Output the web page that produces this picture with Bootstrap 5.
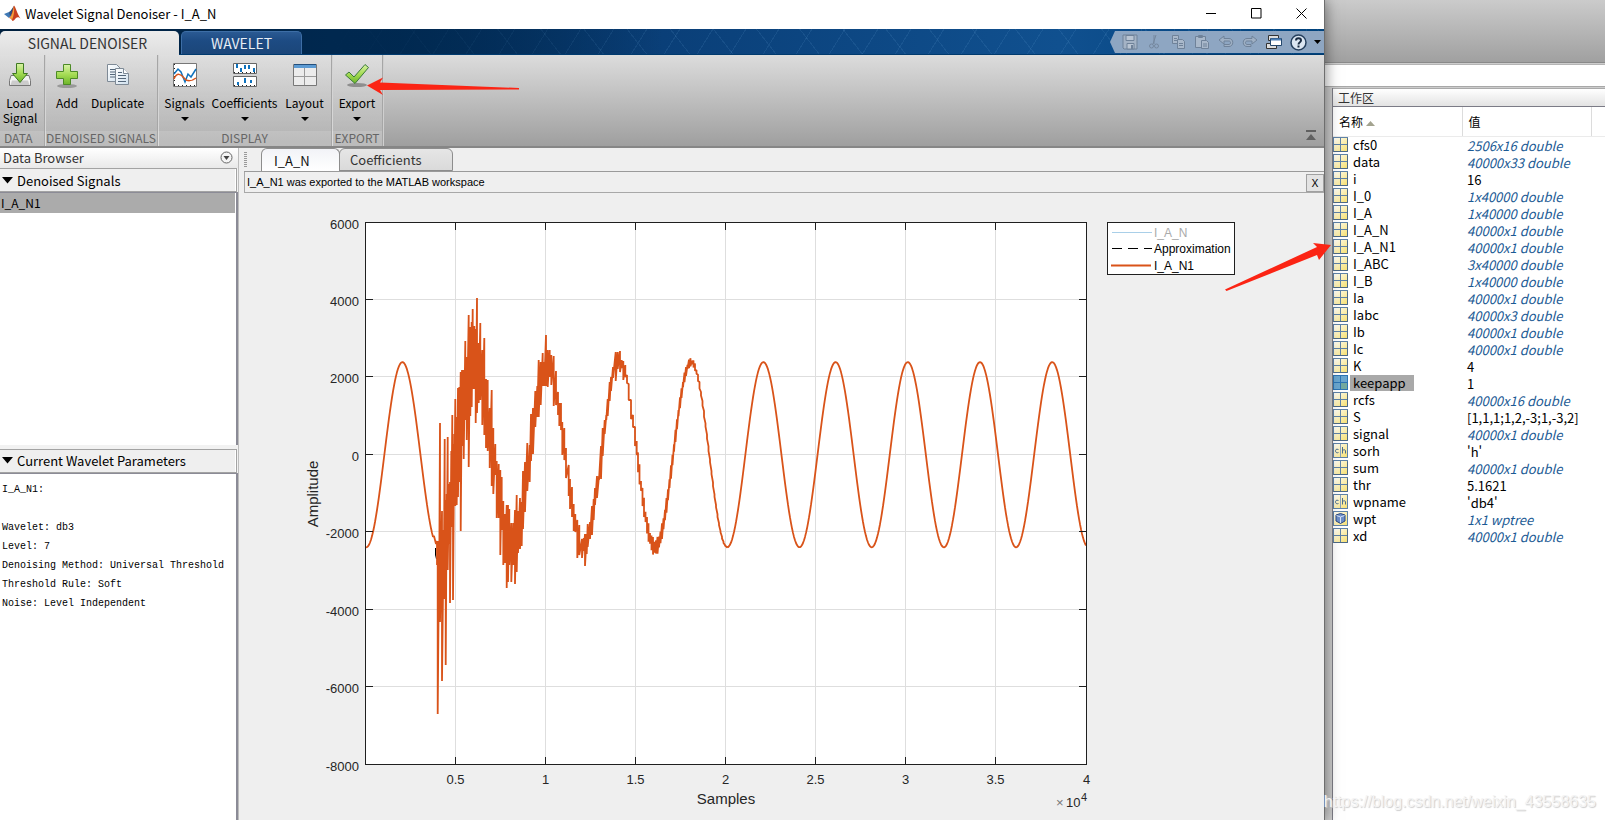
<!DOCTYPE html>
<html lang="en">
<head>
<meta charset="utf-8">
<meta name="viewport" content="width=device-width, initial-scale=1">
<title>Wavelet Signal Denoiser - I_A_N</title>
<link rel="stylesheet" href="https://cdn.jsdelivr.net/npm/bootstrap@5.3.0/dist/css/bootstrap.min.css">
<script src="https://cdn.jsdelivr.net/npm/bootstrap@5.3.0/dist/js/bootstrap.bundle.min.js"></script>
<style>
body{font-family:"Noto Sans CJK SC","Noto Sans",sans-serif;font-size:12px;line-height:15px;color:#000;background:#fff}
button{border:0;background:none;padding:0;color:inherit;font:inherit}
svg{display:block}
.app-window{background:#efefef;border-right:1px solid #6e6e6e;box-shadow:0 0 14px rgba(0,0,0,.5);z-index:2;min-width:0}
.title-bar{height:29px;background:#fff;font-size:13px;line-height:26px;padding-left:4px;padding-bottom:2px}
.win-btn{width:45px;height:27px}
.tab-strip{height:26px;background:linear-gradient(90deg,#00203f 0,#00284f 25%,rgba(0,40,79,0) 50%),repeating-linear-gradient(52deg,transparent 0 33px,rgba(110,170,220,.12) 33px 34px),repeating-linear-gradient(-58deg,transparent 0 27px,rgba(110,170,220,.12) 27px 28px),linear-gradient(90deg,#00203f 0,#00284f 25%,#0a3f78 50%,#10508f 80%,#00427c 100%);border-bottom:1px solid #003a6e}
.tool-tab{font-size:14px;line-height:23px;height:23px;border-radius:5px 5px 0 0}
.tool-tab.on{width:179px;background:linear-gradient(#ececec,#dedede);color:#333;height:24px;margin-bottom:-1px;padding-right:4px}
.tool-tab.off{width:121px;margin-left:2px;background:linear-gradient(#2a5a93,#1d4b83 40%,#1b4679);color:#e8eef5;border:1px solid #3d6ea6;border-bottom:0}
.quick-bar{height:22px;width:214px;margin-bottom:1px;background:#8ea6c2;clip-path:polygon(5px 0,100% 0,100% 100%,5px 100%,0 50%)}
.quick-btn{width:24px;height:22px}
.ribbon{height:93px;background:linear-gradient(#dcdcdc,#9f9f9f);border-bottom:2px solid #868686}
.ribbon-section{border-right:1px solid #a6a6a6;box-shadow:1px 0 0 #cfcfcf;background:linear-gradient(rgba(255,255,255,.08),rgba(255,255,255,.18))}
.section-name{height:15px;line-height:13px;font-size:12px;color:#666;background:rgba(255,255,255,.14);white-space:nowrap}
.tool-btn{padding-top:7px;display:flex;flex-direction:column;align-items:center;justify-content:flex-start}
.tool-btn svg.tool-icon{width:26px;height:26px;margin-bottom:7px}
.drop-mark{margin-top:7px}
.side-panel{width:239px;background:#f2f2f2;border-right:1px solid #bdbdbd}
.side-title{height:20px;padding-left:3px;padding-right:5px;padding-bottom:2px;background:linear-gradient(#fff,#e9e9e9);color:#333;font-size:13px}
.fold-head{height:24px;margin-right:1px;border:1px solid #a3a3a3;border-left:0;background:#efefef;font-size:13px;padding-left:2px;box-shadow:inset -1px 0 0 #fff}
.pane{background:#fff;border-right:2px solid #8b8b96;border-top:1px solid #8b8b96;min-height:0}
.signal-item{height:20px;background:#ababab;font-size:12px;line-height:20px;padding-left:1px;text-align:left;margin-right:1px}
.params{font-family:"Liberation Mono",monospace;font-size:10px;line-height:19px;padding:6px 2px;margin:0;overflow:hidden}
.doc-tabs{height:24px;border-bottom:1px solid #9a9a9a;margin-left:5px;font-size:13px}
.doc-tab{height:23px;border:1px solid #8d8d8d;border-radius:6px 6px 0 0;text-align:left;line-height:19px;color:#333}
.doc-tab.on{width:79px;background:linear-gradient(#f2f3f7,#fff);border-bottom:0;color:#111;padding-left:12px}
.doc-tab.off{width:114px;margin-left:-1px;background:linear-gradient(#e6e6e6,#dadada);padding-left:10px}
.grip{width:3px;height:15px;margin-right:14px;background:repeating-linear-gradient(#9a9a9a 0 1px,transparent 1px 2px)}
.msg-bar{height:21px;margin-left:5px;border-bottom:1px solid #a8a8a8;border-left:1px solid #a8a8a8;padding:1px 0 0 2px;font-family:"Liberation Sans",sans-serif;font-size:11px}
.msg-close{width:18px;height:18px;border:1px solid #a0a0a0;background:#e3e3e3;font-size:11px;line-height:16px;font-family:"Noto Sans",sans-serif}
.plot{font-family:"Liberation Sans",sans-serif;font-size:13px;fill:#262626}
.plot .axis-name{font-size:15px}
.plot .key{font-size:12px;fill:#000}
.plot .exponent{font-size:11px}
.workspace{width:280px;background:#cdcdcd}
.desk-top{height:63px;background:linear-gradient(#cbcbcb,#a0a0a0);border-bottom:1px solid #8a8a8a}
.desk-bar{height:23px;background:#fff;margin-top:1px;border-top:1px solid #b5b5b5;border-bottom:1px solid #a8a8a8}
.ws-panel{margin:1px 0 0 7px;border-left:1px solid #7d7d86;background:#fff}
.ws-title{height:19px;line-height:17px;padding-left:5px;background:linear-gradient(#fff,#e3e3e3);border-top:1px solid #aaa;border-bottom:1px solid #7b7b86;color:#333}
.ws-table{table-layout:fixed;width:100%;border-collapse:collapse;font-size:13px;line-height:17px}
.ws-table th{height:29px;font-weight:400;font-size:12px;padding:0 0 0 6px;border-right:1px solid #dcdcdc;border-bottom:1px solid #ebebeb}
.ws-table td{height:17px;padding:0;white-space:nowrap}
.ws-table td + td{padding-left:5px}
.ws-table i{color:#1b5a94}
.var-name{padding:0 8px 0 3px;margin-left:1px;line-height:16px}
.var-name.picked{background:#a9a9a9}
.var-icon{width:16px;height:16px}
.arrow-export{left:367px;top:76px;width:154px;height:20px;z-index:5;pointer-events:none}
.arrow-ws{right:-8px;top:240px;width:108px;height:54px;z-index:5;pointer-events:none}
.watermark{right:9px;bottom:8px;font:16px/20px "Liberation Sans",sans-serif;color:#f4f4f4;text-shadow:1px 1px 1px #ccc;z-index:6;pointer-events:none}
</style>
</head>
<body class="d-flex vh-100 overflow-hidden position-relative">

<svg width="0" height="0" class="position-absolute" aria-hidden="true">
  <defs>
    <linearGradient id="green" x1="0" y1="0" x2="0" y2="1"><stop offset="0" stop-color="#d9f2a8"/><stop offset=".5" stop-color="#a5dc54"/><stop offset="1" stop-color="#6db52a"/></linearGradient>
    <linearGradient id="paper" x1="0" y1="0" x2="1" y2="1"><stop offset="0" stop-color="#fff"/><stop offset="1" stop-color="#cfe0ee"/></linearGradient>
    <linearGradient id="yellow" x1="0" y1="0" x2="1" y2="1"><stop offset="0" stop-color="#fff"/><stop offset="1" stop-color="#f7e06e"/></linearGradient>
    <symbol id="v-num" viewBox="0 0 16 16"><rect x=".5" y=".5" width="14" height="14" fill="url(#yellow)" stroke="#5f83a8"/><path d="M7.500 1v13M1 7.500h13" stroke="#5f83a8"/><path d="M.5 14.500h14v-13" fill="none" stroke="#4e6a86"/></symbol>
    <symbol id="v-sel" viewBox="0 0 16 16"><rect x=".5" y=".5" width="14" height="14" fill="#6aa6cf" stroke="#2c74b4"/><rect x="8" y="8" width="6" height="6" fill="#72a9a0"/><path d="M7.500 1v13M1 7.500h13" stroke="#2c74b4"/></symbol>
    <symbol id="v-chr" viewBox="0 0 16 16"><rect x=".5" y=".5" width="14" height="14" fill="url(#yellow)" stroke="#5f83a8"/><path d="M7.500 1v13" stroke="#8ba4bc"/><path d="M5.500 6.500c-2.500-1-3 .5-3 1.500s1 2.500 3 1.500M9.500 4v6.500M9.500 7.500c2-1.500 3-.5 3 .5v2.500" fill="none" stroke="#4c6f8f"/></symbol>
    <symbol id="v-obj" viewBox="0 0 16 16"><rect x=".5" y=".5" width="14" height="14" fill="url(#yellow)" stroke="#5f83a8"/><path d="M7.500 2.500l4.500 1.500v6l-4.500 2.500L3 10V4z" fill="#6d8fca" stroke="#2c4a80"/><path d="M3.500 4.500l4 1.500 4-1.500M7.500 6v6" fill="none" stroke="#d8e4f6"/></symbol>
  </defs>
</svg>

<main class="app-window flex-grow-1 d-flex flex-column position-relative">
  <header class="title-bar d-flex align-items-center">
    <svg width="17" height="17" viewBox="0 0 17 17"><path d="M0 9l5-2 3 3-3 3z" fill="#3f79b5"/><path d="M5 7c2-1 3-4 5-6l-1 7-3 3z" fill="#2b4f7d"/><path d="M10 .5c1.500 1 3 8 6.500 13-2-2-3.500-1.500-5 0-1 1.500-2 2.500-3 2.500-1-2-2-3-3.500-3C8 12 8.500 3 10 .5z" fill="#c9401d"/><path d="M10 1c.5 5 0 9-2 14-1-2-1.500-2-3-2C8 12 9 6 10 1z" fill="#f3a33c"/></svg>
    <span class="ms-1 me-auto">Wavelet Signal Denoiser - I_A_N</span>
    <button class="win-btn" aria-label="Minimize"><svg class="mx-auto" width="11" height="11"><path d="M0 5.500h10" stroke="#000"/></svg></button>
    <button class="win-btn" aria-label="Maximize"><svg class="mx-auto" width="11" height="11"><path d="M.5.5h9.500v9.500H.5z" fill="none" stroke="#000"/></svg></button>
    <button class="win-btn" aria-label="Close"><svg class="mx-auto" width="11" height="11"><path d="M.5.5l10 10M10.500.5l-10 10" stroke="#000"/></svg></button>
  </header>

  <nav class="tab-strip d-flex align-items-end">
    <button class="tool-tab on">SIGNAL DENOISER</button>
    <button class="tool-tab off">WAVELET</button>
    <div class="quick-bar ms-auto ps-2 d-flex align-items-center">
      <button class="quick-btn" aria-label="Save"><svg class="mx-auto" width="16" height="16"><path d="M1 1h14v14H2l-1-1z" fill="#a4b3c5" stroke="#6f8299"/><path d="M4 1.500h8v5H4zM5 9.500h7V15H5z" fill="#b9c5d3" stroke="#6f8299"/><path d="M9 11h2v4H9z" fill="#6f8299"/></svg></button>
      <button class="quick-btn" aria-label="Cut"><svg class="mx-auto" width="16" height="16" fill="none" stroke="#74879e"><path d="M10 1L7 10M8 1v9"/><circle cx="5.500" cy="12" r="2"/><circle cx="10.500" cy="12" r="2"/></svg></button>
      <button class="quick-btn" aria-label="Copy"><svg class="mx-auto" width="16" height="16" fill="#a9b8ca" stroke="#6f8299"><path d="M2.500 1.500h6v8h-6z"/><path d="M7.500 5.500h5l2 2v7h-7zM9 9.500h4M9 11.500h4M4 4.500h3M4 6.500h3"/></svg></button>
      <button class="quick-btn" aria-label="Paste"><svg class="mx-auto" width="16" height="16" fill="#a9b8ca" stroke="#6f8299"><path d="M1.500 2.500h10v11h-10zM4.500 1.500h4v2h-4z"/><path d="M7.500 6.500h5l2 2v6h-7zM9 10h4M9 12h4"/></svg></button>
      <button class="quick-btn" aria-label="Undo"><svg class="mx-auto" width="16" height="16"><path d="M1 6l5-4v2.500h5c5 0 5 8 0 8H6v-2h5c2 0 2-3.500 0-3.500H6V10z" fill="#9fb0c4" stroke="#6f8299"/></svg></button>
      <button class="quick-btn" aria-label="Redo"><svg class="mx-auto" width="16" height="16"><path d="M15 6l-5-4v2.500H5c-5 0-5 8 0 8h4v-2H5c-2 0-2-3.500 0-3.500h5V10z" fill="#9fb0c4" stroke="#6f8299"/></svg></button>
      <button class="quick-btn" aria-label="Switch windows"><svg class="mx-auto" width="16" height="16"><path d="M2.500 1.500h10v5h-10zM.5 9.500h10v5H.5z" fill="#ddd" stroke="#333"/><path d="M4.500 4.500h11v7h-11z" fill="#fff" stroke="#24486e"/><path d="M5 5.500h10" stroke="#4d7fb5" stroke-width="2"/></svg></button>
      <button class="quick-btn" aria-label="Help"><svg class="mx-auto" width="17" height="17"><circle cx="8.500" cy="8.500" r="7.500" fill="#dbe6f2" stroke="#26405e" stroke-width="1.500"/><path d="M6 6.500c0-3 5-3 5 0 0 2-2.500 1.500-2.500 4M8.500 11.500v2" fill="none" stroke="#1a2c42" stroke-width="2"/></svg></button>
      <button class="flex-grow-1" aria-label="More"><svg class="mx-auto" width="7" height="4"><path d="M0 0h7L3.500 4z"/></svg></button>
    </div>
  </nav>

  <section class="ribbon d-flex position-relative" aria-label="Tools">
    <div class="ribbon-section d-flex flex-column" style="width:45px">
      <div class="d-flex flex-grow-1">
        <button class="tool-btn" style="width:40px"><svg class="tool-icon" viewBox="0 0 26 26"><path d="M4 13.500l-1.500 5v5h21v-5l-1.500-5z" fill="#f3f3f3" stroke="#777"/><path d="M5 18.500h16l1.500 4.500h-19z" fill="#ccc"/><path d="M9.500 1.500h7v10h4L13 20.500l-7.500-9h4z" fill="url(#green)" stroke="#3f7a22"/></svg>Load<br>Signal</button>
      </div>
      <div class="section-name ps-1">DATA</div>
    </div>
    <div class="ribbon-section d-flex flex-column" style="width:113px">
      <div class="d-flex flex-grow-1">
        <button class="tool-btn" style="width:44px"><svg class="tool-icon" viewBox="0 0 26 26"><ellipse cx="13" cy="24" rx="10" ry="2" fill="#999"/><path d="M9.500 2.500h7v7h7v7h-7v6h-7v-6h-7v-7h7z" fill="url(#green)" stroke="#4c8a26"/></svg>Add</button>
        <button class="tool-btn" style="width:57px"><svg class="tool-icon" viewBox="0 0 26 26"><path d="M2.500 2.500h9l4 4v13h-13z" fill="url(#paper)" stroke="#7e8a96"/><path d="M5 7.500h5M5 10h5M5 12.500h5M5 15h5" stroke="#54677a"/><path d="M10.500 6.500h8l5 5v11h-13z" fill="url(#paper)" stroke="#7e8a96"/><path d="M18.500 6.500v5h5" fill="#fff" stroke="#7e8a96"/><path d="M13 10.500h4M13 13.500h8M13 16.500h8M13 19.500h8" stroke="#54677a"/></svg>Duplicate</button>
      </div>
      <div class="section-name text-center">DENOISED SIGNALS</div>
    </div>
    <div class="ribbon-section d-flex flex-column" style="width:174px">
      <div class="d-flex flex-grow-1 ps-1">
        <button class="tool-btn" style="width:45px"><svg class="tool-icon" viewBox="0 0 26 26"><path d="M1.500 1.500h23v23h-23z" fill="#fff" stroke="#777"/><path d="M2.500 2v22M2 23.500h23" fill="none" stroke="#222" stroke-dasharray="1 3"/><path d="M2 12l4-5 3 3 4 10 3-8 3 3 5-8" fill="none" stroke="#0f72bd" stroke-width="1.500"/><path d="M2 17c3-7 7-5 10-1s8 3 12 0" fill="none" stroke="#d95319" stroke-width="1.500"/></svg>Signals<svg width="8" height="4" class="drop-mark"><path d="M0 0h8L4 4z"/></svg></button>
        <button class="tool-btn" style="width:75px"><svg class="tool-icon" viewBox="0 0 26 26"><path d="M1.500 1.500h23v10h-23zM1.500 14.500h23v10h-23z" fill="#fff" stroke="#666"/><path d="M2 10.500h23M2 23.500h23" stroke="#222" stroke-dasharray="1 3"/><path d="M5 2v4M9 6v4M13 3v4M17 3v4M22 6v4M6 20v3M13 16v5M19 18v3" stroke="#0f72bd" stroke-width="2"/></svg>Coefficients<svg width="8" height="4" class="drop-mark"><path d="M0 0h8L4 4z"/></svg></button>
        <button class="tool-btn" style="width:45px"><svg class="tool-icon" viewBox="0 0 26 26"><path d="M1.500 2.500h23v21h-23z" fill="#ececec" stroke="#777"/><path d="M2 3h22v3H2z" fill="#5c9bd3"/><path d="M2 2.500h22" stroke="#234f7c"/><path d="M12.500 6v17M2 14.500h22" stroke="#9a9a9a"/></svg>Layout<svg width="8" height="4" class="drop-mark"><path d="M0 0h8L4 4z"/></svg></button>
      </div>
      <div class="section-name text-center">DISPLAY</div>
    </div>
    <div class="ribbon-section d-flex flex-column" style="width:51px">
      <div class="d-flex flex-grow-1">
        <button class="tool-btn w-100"><svg class="tool-icon" viewBox="0 0 26 26"><ellipse cx="13" cy="23" rx="10" ry="2" fill="#8e8e8e"/><path d="M1.500 13l3.500-3 5 5L21 2.500l3.500 3L11 21.500z" fill="url(#green)" stroke="#3c7a3a"/></svg>Export<svg width="8" height="4" class="drop-mark"><path d="M0 0h8L4 4z"/></svg></button>
      </div>
      <div class="section-name text-center">EXPORT</div>
    </div>
    <button class="ms-auto me-2 mt-auto mb-1" aria-label="Minimize ribbon"><svg width="10" height="12"><path d="M0 0h10v2H0zM5 4l5 6H0z" fill="#606060"/></svg></button>
  </section>

  <div class="d-flex flex-grow-1" style="min-height:0">
    <aside class="side-panel d-flex flex-column">
      <div class="side-title d-flex align-items-center justify-content-between">Data Browser
        <button aria-label="Panel menu"><svg width="13" height="13"><circle cx="6.500" cy="6.500" r="5.500" fill="#f5f5f5" stroke="#666"/><path d="M3.500 5h6L6.500 9z" fill="#444"/></svg></button></div>
      <button class="fold-head d-flex align-items-center"><svg class="me-1" width="11" height="7"><path d="M0 0h11L5.500 6.500z"/></svg>Denoised Signals</button>
      <div class="pane d-flex flex-column" style="flex:257 0 0"><button class="signal-item">I_A_N1</button></div>
      <div style="height:4px"></div>
      <button class="fold-head d-flex align-items-center"><svg class="me-1" width="11" height="7"><path d="M0 0h11L5.500 6.500z"/></svg>Current Wavelet Parameters</button>
      <pre class="params pane" style="flex:341 0 0">I_A_N1:

Wavelet: db3
Level: 7
Denoising Method: Universal Threshold
Threshold Rule: Soft
Noise: Level Independent</pre>
    </aside>

    <section class="flex-grow-1 d-flex flex-column" style="min-width:0">
      <div class="doc-tabs d-flex align-items-end">
        <div class="grip align-self-center"></div>
        <button class="doc-tab on">I_A_N</button>
        <button class="doc-tab off">Coefficients</button>
      </div>
      <div class="msg-bar d-flex align-items-center justify-content-between">I_A_N1 was exported to the MATLAB workspace<button class="msg-close">X</button></div>
      <div class="flex-grow-1" style="min-height:0">
        <svg id="plot" class="plot w-100 h-100" viewBox="239 193 1085 627" role="img" aria-label="Amplitude over samples">
          <rect x="366" y="222.500" width="721" height="542" fill="#fff"/>
          <g id="grid" stroke="#dedede"></g>
          <path d="M435.500 548v7l1 4" stroke="#000" fill="none"/>
          <path id="trace" fill="none" stroke="#d95319" stroke-width="1.800" stroke-linejoin="bevel"/>
          <g id="ticks" stroke="#1f1f1f"></g>
          <rect x="365.500" y="222.500" width="721" height="542" fill="none" stroke="#1f1f1f"/>
          <g id="labels"></g>
          <text class="axis-name" x="726" y="804" text-anchor="middle">Samples</text>
          <text class="axis-name" transform="rotate(-90 318 494)" x="318" y="494" text-anchor="middle">Amplitude</text>
          <text x="1056" y="807" fill="#777">×</text><text x="1066" y="807">10</text><text class="exponent" x="1081" y="801">4</text>
          <rect x="1107.500" y="222.500" width="127" height="52" fill="#fff" stroke="#1f1f1f"/>
          <path d="M1112 232.500h40" stroke="#a9cfe8"/><path d="M1112 248.500h40" stroke="#000" stroke-dasharray="10 6"/><path d="M1111 265.500h40" stroke="#d95319" stroke-width="2"/>
          <g class="key"><text x="1154" y="237" fill="#aaa" style="fill:#aaa">I_A_N</text><text x="1154" y="253">Approximation</text><text x="1154" y="270">I_A_N1</text></g>
        </svg>
      </div>
    </section>
  </div>

  <svg class="arrow-export position-absolute" viewBox="0 0 154 20"><path d="M0 9.500L16 1.500 13 6.500 152 12v1.500L13 14l3 5z" fill="#fb2414"/></svg>
  <svg class="arrow-ws position-absolute" viewBox="0 0 108 54"><path d="M107 5L89 3l4 4L1 49.500l1.500 1.500L93 15l2 5z" fill="#fb2414"/></svg>
</main>

<aside class="workspace d-flex flex-column">
  <div class="desk-top"></div>
  <div class="desk-bar"></div>
  <div class="ws-panel flex-grow-1" lang="zh-CN">
    <div class="ws-title">工作区</div>
    <table class="ws-table">
      <colgroup><col style="width:129px"><col style="width:129px"><col></colgroup>
      <thead><tr><th>名称 <svg class="d-inline-block" width="9" height="5"><path d="M0 5h9L4.500 0z" fill="#a3a38f"/></svg></th><th>值</th><th class="border-end-0"></th></tr></thead>
      <tbody id="vars"></tbody>
    </table>
  </div>
</aside>
<div class="watermark position-absolute">https://blog.csdn.net/weixin_43558635</div>

<script>
// Workspace variables: name, value, icon kind
const vars = [
  ["cfs0","2506x16 double"],["data","40000x33 double"],["i","16"],["I_0","1x40000 double"],["I_A","1x40000 double"],
  ["I_A_N","40000x1 double"],["I_A_N1","40000x1 double"],["I_ABC","3x40000 double"],["I_B","1x40000 double"],
  ["Ia","40000x1 double"],["Iabc","40000x3 double"],["Ib","40000x1 double"],["Ic","40000x1 double"],["K","4"],
  ["keepapp","1","sel"],["rcfs","40000x16 double"],["S","[1,1,1;1,2,-3;1,-3,2]"],["signal","40000x1 double"],
  ["sorh","'h'","chr"],["sum","40000x1 double"],["thr","5.1621"],["wpname","'db4'","chr"],["wpt","1x1 wptree","obj"],["xd","40000x1 double"]];
document.getElementById("vars").innerHTML = vars.map(([n, v, k = "num"]) => {
  const val = /double|wptree/.test(v) ? `<i>${v}</i>` : v;
  return `<tr><td><div class="d-flex align-items-center"><svg class="var-icon"><use href="#v-${k}"/></svg><span class="var-name${k === "sel" ? " picked" : ""}">${n}</span></div></td><td colspan="2">${val}</td></tr>`;
}).join("");

// Axes
let grid = "", ticks = "", labels = "";
for (let i = 1; i <= 8; i++) {
  const x = Math.round(365.5 + i * 90.125) - .5;
  if (i < 8) {
    grid += `<path d="M${x} 223v541"/>`;
    ticks += `<path d="M${x} 764v-7M${x} 223v7"/>`;
  }
  labels += `<text x="${x}" y="784" text-anchor="middle">${i / 2}</text>`;
}
for (let i = 0; i <= 7; i++) {
  const y = Math.round(222.5 + i * 77.43) - .5;
  if (i && i < 7) {
    grid += `<path d="M366 ${y}h720"/>`;
    ticks += `<path d="M366 ${y}h7M1086 ${y}h-7"/>`;
  }
  labels += `<text x="359" y="${y + 6}" text-anchor="end">${6000 - i * 2000}</text>`;
}
document.getElementById("grid").innerHTML = grid;
document.getElementById("ticks").innerHTML = ticks;
document.getElementById("labels").innerHTML = labels;

// Disturbed stretch of the signal: x, upper bound, lower bound
const burst = [437,541,565,437.7,541,714,439,560,621,440,423,622,442,511,681,443.7,530,599,444.7,439,599,445.7,500,665,446.7,494,570,447.7,437,570,449,484,544,450,482,603,451.3,451,527,452.3,415,520,453,444,600,454.3,434,499,455.3,399,506,456.7,417,505,458,388,497,459.3,387,482,460.7,372,531,462,370,446,463.700,370,459,465.3,341,420,466.7,357,440,468.7,315,467,470.3,327,416,471.7,322,407,472.7,309,389,474.3,326,389,475.7,329,423,477,298,413,478.7,343,403,480.3,323,400,482.3,350,425,484.3,338,435,486,379,448,487.7,380,451,489.7,408,468,491.7,390,486,493.3,428,494,495.3,444,475,496.7,461,518,498.7,464,518,500.3,470,555,501.7,477,530,503.3,501,565,505,514,563,506.7,505,588,508,505,582,509.3,509,565,511.3,523,582,513.3,523,565,515,510,584,516.7,495,572,518,511,553,520,498,549,521.7,502,546,523,471,529,525,462,512,527.3,443,491,529.7,445,482,531,414,461,533,408,454,535.3,391,427,537.3,386,417,538.7,360,417,540.7,362,405,542.7,353,386,544.3,362,386,546,335,386,547.7,350,387,549.7,350,377,551.3,355,385,553.7,356,406,556,371,405,558,392,415,559.3,403,426,561,403,430,562.3,422,455,564.3,428,460,566,448,478,568.7,465,496,570,479,509,572,487,517,573.7,504,531,575.3,514,532,577.3,520,558,579.3,525,555,582,539,558,583.7,538,551,585,534,566,586.7,534,554,587.7,524,547,590,522,539,592,506,535,593.7,499,520,595,488,505,597,476,498,599,476,480,601,446,479,602.7,428,456,604.7,420,434,606.3,415,420,607.7,399,416,609.7,382,401,611,377,391,613,367,378,615.7,352,381,617.7,352,369,620,351,372,621.7,360,368,623.3,361,380,625.3,365,377,627,375,383,628.7,384,400,631,400,419,633,415,427,635,427,446,636.7,441,455];
const wave = x => 454.7 + 92.6 * Math.cos(2 * Math.PI * (x - 366.3) / 72.2);
let d = "M366 " + wave(366).toFixed(1);
for (let x = 367; x < 434; x++) d += `L${x} ${wave(x).toFixed(1)}`;
d += "L434 536L436 544";
for (let i = 0; i < burst.length; i += 3) d += `L${burst[i]} ${burst[i + 1]}V${burst[i + 2]}`;
let step = 0;
for (let x = 638; x < 732; x += 1.5) {
  const fade = 9 * Math.pow((732 - x) / 94, 1.1) * (0.5 + Math.abs(Math.sin(++step * 7.3)) * .7);
  const y = wave(x);
  d += `L${x} ${(y - fade).toFixed(1)}V${(y + fade).toFixed(1)}`;
}
for (let x = 732; x <= 1086; x++) d += `L${x} ${wave(x).toFixed(1)}`;
document.getElementById("trace").setAttribute("d", d);
</script>
</body>
</html>
